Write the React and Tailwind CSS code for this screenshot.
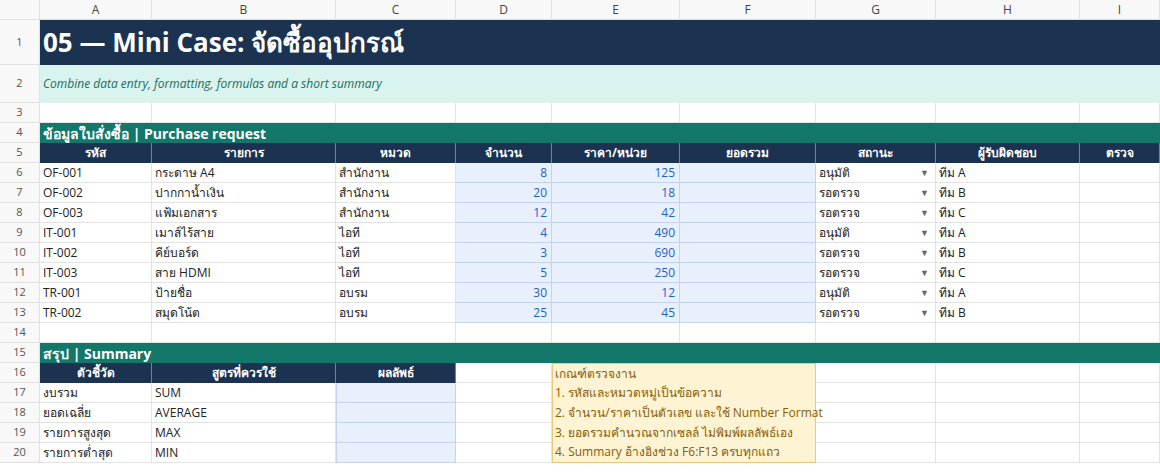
import React from 'react';

const COLS = ['A', 'B', 'C', 'D', 'E', 'F', 'G', 'H', 'I'];

const items = [
  ['OF-001', 'กระดาษ A4', 'สำนักงาน', 8, 125, 'อนุมัติ', 'ทีม A'],
  ['OF-002', 'ปากกาน้ำเงิน', 'สำนักงาน', 20, 18, 'รอตรวจ', 'ทีม B'],
  ['OF-003', 'แฟ้มเอกสาร', 'สำนักงาน', 12, 42, 'รอตรวจ', 'ทีม C'],
  ['IT-001', 'เมาส์ไร้สาย', 'ไอที', 4, 490, 'อนุมัติ', 'ทีม A'],
  ['IT-002', 'คีย์บอร์ด', 'ไอที', 3, 690, 'รอตรวจ', 'ทีม B'],
  ['IT-003', 'สาย HDMI', 'ไอที', 5, 250, 'รอตรวจ', 'ทีม C'],
  ['TR-001', 'ป้ายชื่อ', 'อบรม', 30, 12, 'อนุมัติ', 'ทีม A'],
  ['TR-002', 'สมุดโน้ต', 'อบรม', 25, 45, 'รอตรวจ', 'ทีม B'],
];

const summary = [
  ['งบรวม', 'SUM'],
  ['ยอดเฉลี่ย', 'AVERAGE'],
  ['รายการสูงสุด', 'MAX'],
  ['รายการต่ำสุด', 'MIN'],
];

const headers = ['รหัส', 'รายการ', 'หมวด', 'จำนวน', 'ราคา/หน่วย', 'ยอดรวม', 'สถานะ', 'ผู้รับผิดชอบ', 'ตรวจ'];

const cell = 'border-r border-b border-[#e3e3e3] px-[3px] flex items-center whitespace-nowrap overflow-hidden';
const num = 'bg-[#f8f8f8] border-r border-b border-[#e0e0e0] text-[#555] text-[11px] flex items-center justify-center';
const head = 'bg-[#1b3350] text-white font-bold border-r border-[#6a82a3] flex items-center justify-center';
const input = 'bg-[#e8effd] border-r border-b border-[#c4d2f3] text-[#1f5fd0] justify-end px-[4px] flex items-center';

function Empty({ n }) {
  return Array.from({ length: n }).map((_, i) => <div key={i} className={cell} />);
}

export default function App() {
  return (
    <div
      className="grid w-[1160px] h-[475px] overflow-hidden bg-white text-[12px] text-[#222] grid-cols-[40px_112px_184px_120px_96px_128px_136px_120px_144px_80px] grid-rows-[20px_45px_38px_repeat(18,20px)]"
      style={{ fontFamily: '"Open Sans", "Noto Sans", sans-serif' }}
    >
      {/* column headers */}
      <div className="bg-[#f8f8f8] border-r border-b border-[#e0e0e0]" />
      {COLS.map((c) => (
        <div key={c} className="bg-[#f8f8f8] border-r border-b border-[#e0e0e0] text-[#444] text-[12px] flex items-center justify-center">{c}</div>
      ))}

      <div className={num}>1</div>
      <div className="col-span-9 bg-[#1b3350] text-white font-bold text-[26px] flex items-center px-[3px]">05 — Mini Case: จัดซื้ออุปกรณ์</div>

      <div className={num}>2</div>
      <div className="col-span-9 bg-[#d9f3ee] text-[#1a6e5e] italic text-[12px] flex items-center px-[3px]">Combine data entry, formatting, formulas and a short summary</div>

      <div className={num}>3</div>
      <Empty n={9} />

      <div className={num}>4</div>
      <div className="col-span-9 bg-[#13776a] text-white font-bold text-[14px] flex items-center px-[3px]">ข้อมูลใบสั่งซื้อ | Purchase request</div>

      <div className={num}>5</div>
      {headers.map((h) => (
        <div key={h} className={head}>{h}</div>
      ))}

      {items.map((r, i) => (
        <React.Fragment key={r[0]}>
          <div className={num}>{i + 6}</div>
          <div className={cell}>{r[0]}</div>
          <div className={cell}>{r[1]}</div>
          <div className={cell}>{r[2]}</div>
          <div className={input}>{r[3]}</div>
          <div className={input}>{r[4]}</div>
          <div className={input} />
          <div className={`${cell} justify-between`}>
            <span>{r[5]}</span>
            <span className="text-[#666] text-[9px] pr-[3px]">▼</span>
          </div>
          <div className={cell}>{r[6]}</div>
          <div className={cell} />
        </React.Fragment>
      ))}

      <div className={num}>14</div>
      <Empty n={9} />

      <div className={num}>15</div>
      <div className="col-span-9 bg-[#13776a] text-white font-bold text-[14px] flex items-center px-[3px]">สรุป | Summary</div>

      <div className={num}>16</div>
      <div className={head}>ตัวชี้วัด</div>
      <div className={head}>สูตรที่ควรใช้</div>
      <div className={head}>ผลลัพธ์</div>
      <div className={cell} />
      <div className="col-span-2 row-span-5 bg-[#fef3d2] border border-[#ecc978] text-[#8a5c06] text-[12px] flex flex-col px-[2px]">
        {['เกณฑ์ตรวจงาน', '1. รหัสและหมวดหมู่เป็นข้อความ', '2. จำนวน/ราคาเป็นตัวเลข และใช้ Number Format', '3. ยอดรวมคำนวณจากเซลล์ ไม่พิมพ์ผลลัพธ์เอง', '4. Summary อ้างอิงช่วง F6:F13 ครบทุกแถว'].map((t) => (
          <div key={t} className="h-[20px] flex items-center whitespace-nowrap">{t}</div>
        ))}
      </div>
      <Empty n={3} />

      {summary.map((s, i) => (
        <React.Fragment key={s[0]}>
          <div className={num}>{i + 17}</div>
          <div className={cell}>{s[0]}</div>
          <div className={cell}>{s[1]}</div>
          <div className={`${input} border-l`} />
          <div className={cell} />
          <Empty n={3} />
        </React.Fragment>
      ))}
    </div>
  );
}
